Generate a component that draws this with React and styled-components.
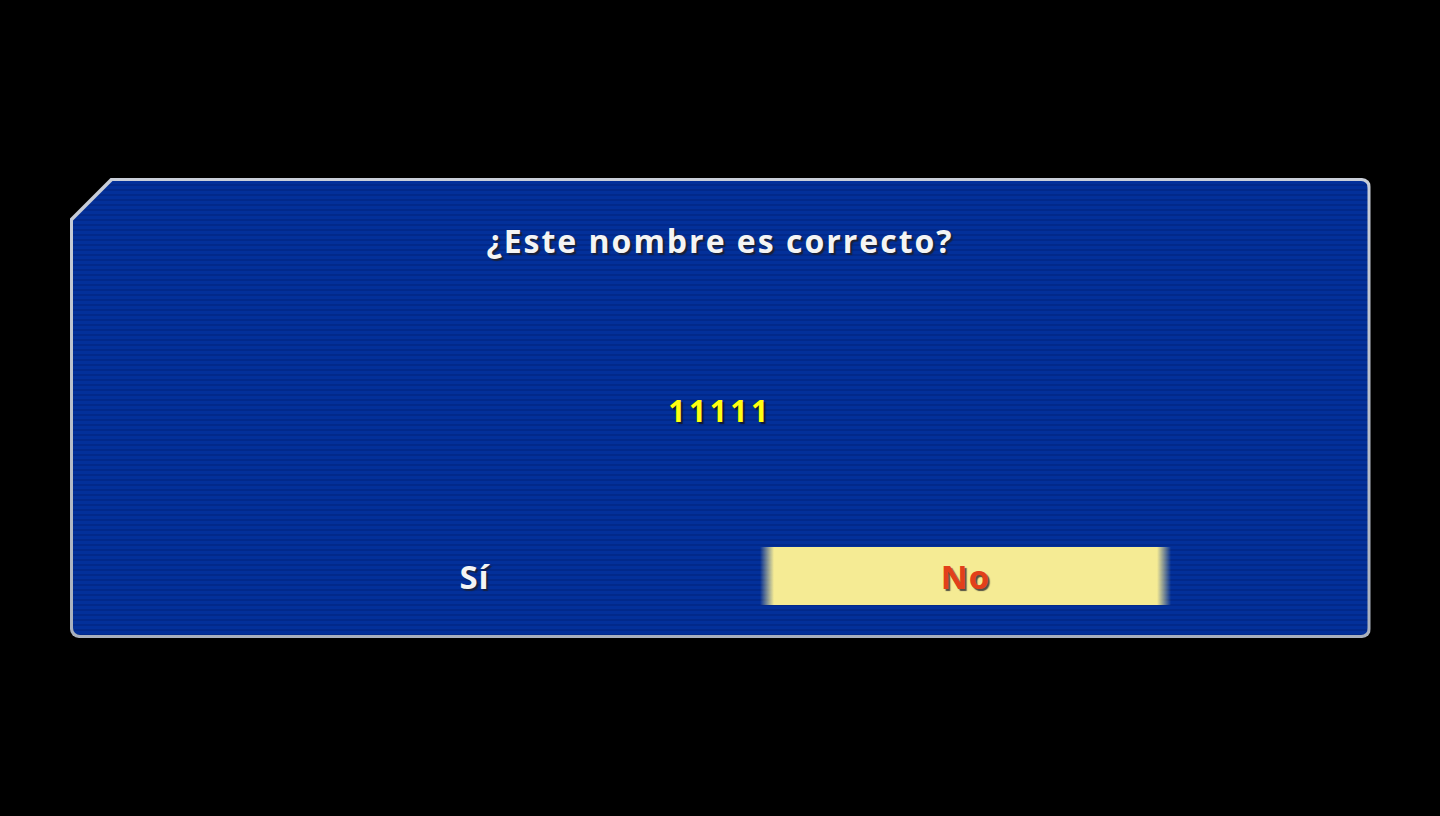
import styled, { createGlobalStyle } from "styled-components";

const GlobalStyle = createGlobalStyle`
  html, body {
    margin: 0;
    padding: 0;
    background: #000;
  }
  body {
    font-family: "Open Sans", "Noto Sans", sans-serif;
  }
`;

const Screen = styled.div`
  width: 1440px;
  height: 816px;
  background: #000;
  display: flex;
  align-items: flex-start;
  justify-content: center;
  padding-top: 178px;
  box-sizing: border-box;
`;

const Frame = styled.div`
  width: 1301px;
  height: 460px;
  padding: 3px;
  box-sizing: border-box;
  border-radius: 9px;
  background: linear-gradient(to bottom, #c9ced8, #a9b0bd);
  clip-path: polygon(41px 0, 100% 0, 100% 100%, 0 100%, 0 41px);
`;

const Panel = styled.div`
  height: 100%;
  border-radius: 7px;
  clip-path: polygon(40px 0, 100% 0, 100% 100%, 0 100%, 0 40px);
  background: repeating-linear-gradient(
    to bottom,
    #03309a 0px,
    #03309a 3px,
    #02298a 3px,
    #02298a 5px
  );
  display: flex;
  flex-direction: column;
  align-items: center;
  padding-top: 39px;
  box-sizing: border-box;
`;

const Title = styled.h1`
  margin: 0;
  font-size: 32px;
  font-weight: 700;
  color: #f4f4f4;
  letter-spacing: 2px;
  line-height: 42px;
  text-shadow: 2px 2px 1px rgba(30, 30, 40, 0.85);
`;

const Name = styled.div`
  margin-top: 129px;
  font-size: 30px;
  font-weight: 700;
  color: #ffff10;
  letter-spacing: 3.5px;
  line-height: 40px;
  text-shadow: 2px 2px 1px rgba(20, 20, 30, 0.8);
`;

const Options = styled.div`
  margin-top: 116px;
  display: grid;
  grid-template-columns: 411px 411px;
  column-gap: 80px;
`;

const Option = styled.div`
  height: 58px;
  display: flex;
  align-items: center;
  justify-content: center;
  font-size: 33px;
  font-weight: 700;
  letter-spacing: 1px;
  color: ${(p) => (p.selected ? "#e2401a" : "#f4f4f4")};
  text-shadow: 2px 2px 1px rgba(30, 30, 40, 0.75);
  background: ${(p) =>
    p.selected
      ? "linear-gradient(to right, rgba(245,235,148,0) 0px, #f5eb94 14px, #f5eb94 calc(100% - 14px), rgba(245,235,148,0) 100%)"
      : "transparent"};
`;

export default function App() {
  return (
    <>
      <GlobalStyle />
      <Screen>
        <Frame>
          <Panel>
            <Title>¿Este nombre es correcto?</Title>
            <Name>11111</Name>
            <Options>
              <Option>Sí</Option>
              <Option selected>No</Option>
            </Options>
          </Panel>
        </Frame>
      </Screen>
    </>
  );
}
